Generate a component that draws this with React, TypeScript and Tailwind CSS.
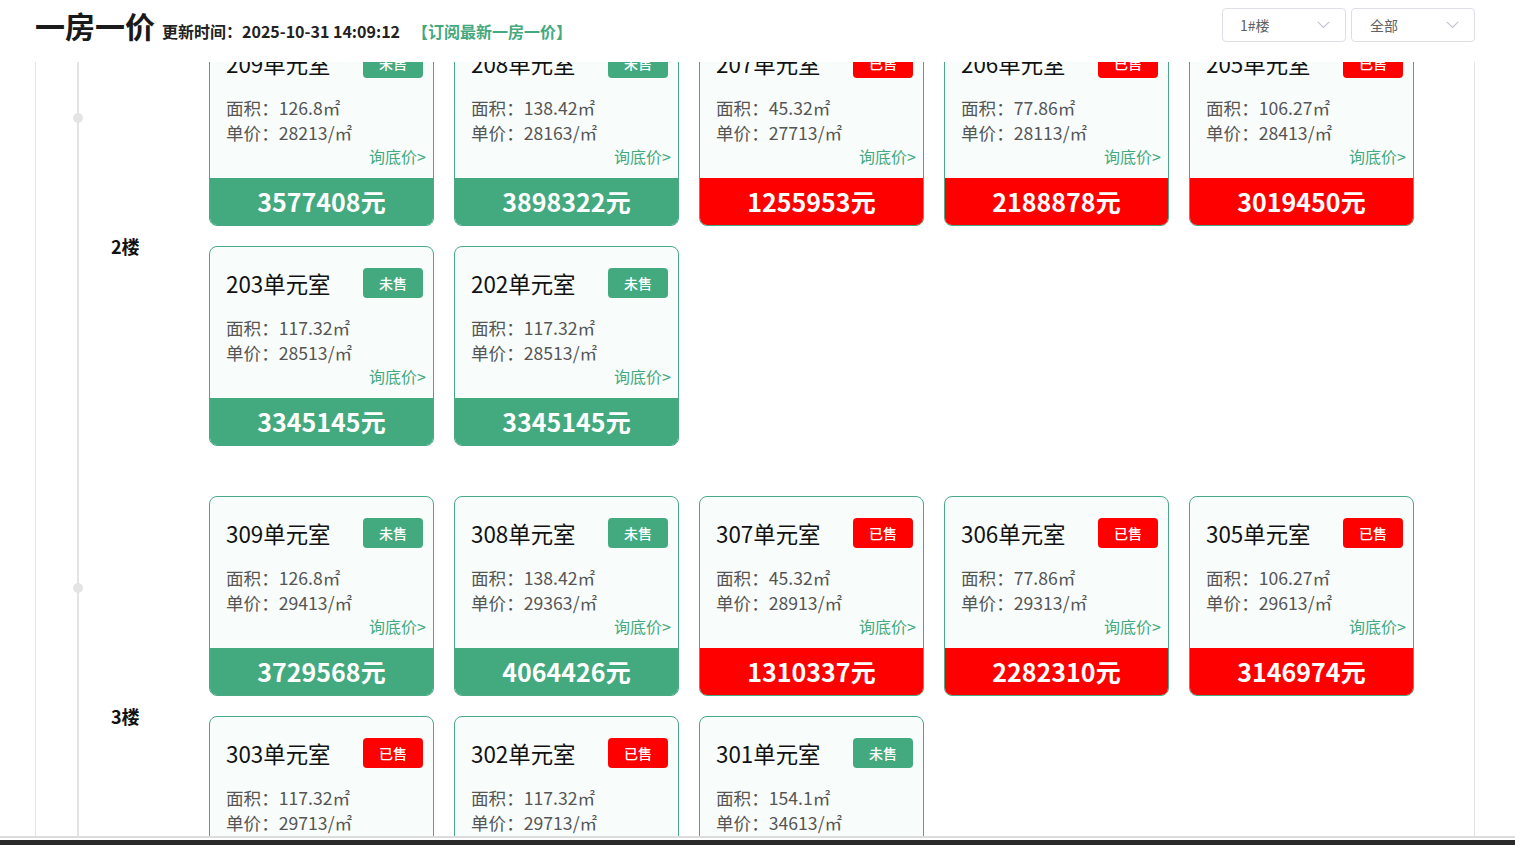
import React from "react";

type Unit = { no: string; sold: boolean; area: string; unit: string; total: string };

const floors: { label: string; units: Unit[] }[] = [
  {
    label: "2楼",
    units: [
      { no: "209", sold: false, area: "126.8", unit: "28213", total: "3577408" },
      { no: "208", sold: false, area: "138.42", unit: "28163", total: "3898322" },
      { no: "207", sold: true, area: "45.32", unit: "27713", total: "1255953" },
      { no: "206", sold: true, area: "77.86", unit: "28113", total: "2188878" },
      { no: "205", sold: true, area: "106.27", unit: "28413", total: "3019450" },
      { no: "203", sold: false, area: "117.32", unit: "28513", total: "3345145" },
      { no: "202", sold: false, area: "117.32", unit: "28513", total: "3345145" },
    ],
  },
  {
    label: "3楼",
    units: [
      { no: "309", sold: false, area: "126.8", unit: "29413", total: "3729568" },
      { no: "308", sold: false, area: "138.42", unit: "29363", total: "4064426" },
      { no: "307", sold: true, area: "45.32", unit: "28913", total: "1310337" },
      { no: "306", sold: true, area: "77.86", unit: "29313", total: "2282310" },
      { no: "305", sold: true, area: "106.27", unit: "29613", total: "3146974" },
      { no: "303", sold: true, area: "117.32", unit: "29713", total: "3485931" },
      { no: "302", sold: true, area: "117.32", unit: "29713", total: "3485931" },
      { no: "301", sold: false, area: "154.1", unit: "34613", total: "5333863" },
    ],
  },
];

function Chevron() {
  return (
    <svg width="13" height="8" viewBox="0 0 13 8" fill="none">
      <path d="M0.8 0.8 L6.5 6.5 L12.2 0.8" stroke="#c0c4cc" strokeWidth="1.2" />
    </svg>
  );
}

function Select({ label, pl }: { label: string; pl: string }) {
  return (
    <div className={`w-[124px] h-[34px] border border-[#dcdfe6] rounded-[4px] flex items-center justify-between ${pl} pr-[15px] bg-white`}>
      <span className="text-[14px] text-[#606266]">{label}</span>
      <Chevron />
    </div>
  );
}

function Card({ u }: { u: Unit }) {
  const bg = u.sold ? "bg-[#ff0000]" : "bg-[#43a97f]";
  return (
    <div className="w-[225px] h-[200px] border border-[#4aa985] rounded-[8px] overflow-hidden bg-[#f8fdfb] flex flex-col">
      <div className="pt-[21px] pl-[16px] pr-[10px]">
        <div className="h-[30px] flex items-center justify-between">
          <span className="text-[22.4px] text-[#111] leading-[30px]">{u.no}单元室</span>
          <span className={`w-[60px] h-[30px] rounded-[4px] ${bg} text-white text-[14px] font-medium flex items-center justify-center`}>
            {u.sold ? "已售" : "未售"}
          </span>
        </div>
        <div className="mt-[17px] text-[17.6px] leading-[25px] text-[#555]">
          <div>面积：{u.area}㎡</div>
          <div>单价：{u.unit}/㎡</div>
        </div>
        <div className="text-right text-[16px] leading-[23px] text-[#43a97f] mr-[-3px]">询底价&gt;</div>
      </div>
      <div className={`mt-auto h-[47px] ${bg} text-white text-[25px] font-bold flex items-center justify-center`}>
        {u.total}元
      </div>
    </div>
  );
}

export default function App() {
  return (
    <div className="w-[1515px] h-[845px] overflow-hidden bg-white flex flex-col font-['Noto_Sans_CJK_SC','Noto_Sans',sans-serif]">
      <header className="h-[62px] shrink-0 ml-[35px] w-[1440px] flex justify-between items-start">
        <div className="flex items-baseline pt-[7px]">
          <span className="text-[30px] leading-[36px] font-bold text-[#1a1a1a]">一房一价</span>
          <span className="ml-[7px] text-[16px] font-bold text-[#222]">更新时间：2025-10-31 14:09:12</span>
          <span className="ml-[12px] text-[16px] font-bold text-[#43a97f]">【订阅最新一房一价】</span>
        </div>
        <div className="flex gap-[5px] mt-[8px]">
          <Select label="1#楼" pl="pl-[17px]" />
          <Select label="全部" pl="pl-[18px]" />
        </div>
      </header>
      <main className="flex-1 overflow-hidden">
        <div className="ml-[35px] w-[1440px] h-full border-x border-[#e4e4e4] overflow-hidden">
          <div className="-mt-[36px]">
            {floors.map((f) => (
              <section key={f.label} className="flex">
                <div className="w-[173px] shrink-0 flex">
                  <div className="w-[41px]" />
                  <div className="w-[2px] bg-[#e4e4e4] relative">
                    <div className="absolute top-[87px] left-[-4px] w-[10px] h-[10px] rounded-full bg-[#e4e4e4]" />
                  </div>
                  <div className="flex-1 flex items-center pl-[32px] pb-[30px]">
                    <span className="text-[18px] font-bold text-[#111]">{f.label}</span>
                  </div>
                </div>
                <div className="grid grid-cols-[repeat(5,225px)] gap-x-[20px] gap-y-[20px] pb-[50px]">
                  {f.units.map((u) => (
                    <Card key={u.no} u={u} />
                  ))}
                </div>
              </section>
            ))}
          </div>
        </div>
      </main>
      <div className="h-[2px] shrink-0 bg-[#dcdcdc]" />
      <div className="h-[2px] shrink-0 bg-white" />
      <div className="h-[5px] shrink-0 bg-[#2a2a2a]" />
    </div>
  );
}
